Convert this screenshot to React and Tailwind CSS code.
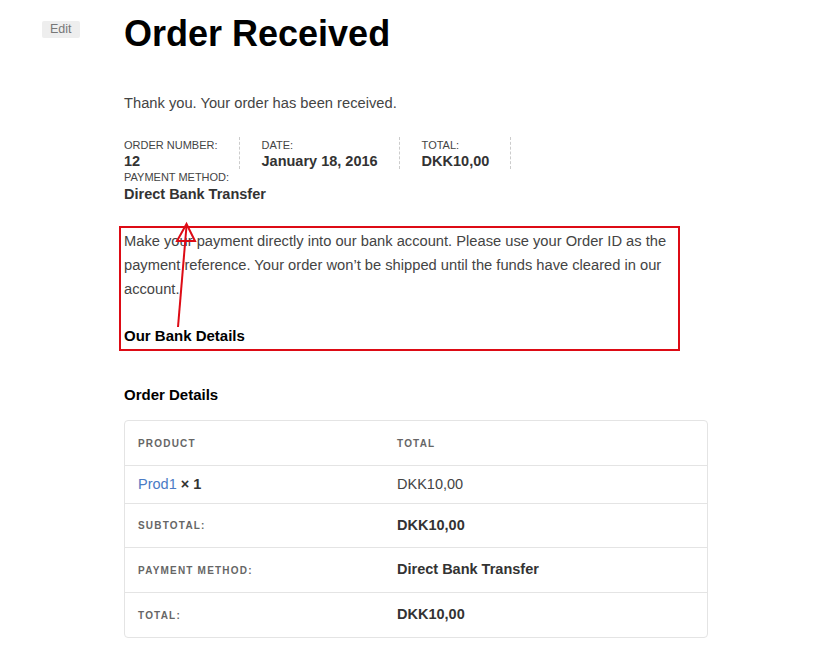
const font = { fontFamily: '"Liberation Sans", Arial, sans-serif' };

const overview = [
    { label: 'Order number:', value: '12' },
    { label: 'Date:', value: 'January 18, 2016' },
    { label: 'Total:', value: 'DKK10,00' },
];

const totals = [
    { label: 'Subtotal:', value: 'DKK10,00', h: 'h-[44px]' },
    { label: 'Payment method:', value: 'Direct Bank Transfer', h: 'h-[45px]' },
    { label: 'Total:', value: 'DKK10,00', h: 'h-[45px]' },
];

const App = () => {
    return (
        <div className="relative w-[832px] h-[668px] bg-white text-[#444] overflow-hidden" style={font}>
            <div className="flex">
                {/* left rail */}
                <div className="w-[124px] shrink-0 pl-[42px] pt-[21px]">
                    <span className="block w-fit bg-[#eee] text-[#777] text-[12.5px] leading-[17px] px-[8px] rounded-[2px]">Edit</span>
                </div>

                <main className="w-[584px] pt-[12px]">
                    <h1 className="text-[36px] leading-[43px] font-bold text-black">Order Received</h1>

                    <p className="mt-[38px] text-[14.7px] leading-[20px] text-[#444]">Thank you. Your order has been received.</p>

                    <ul className="mt-[24px] flex flex-wrap">
                        {overview.map((item) => (
                            <li key={item.label} className="pr-[21px] mr-[22px] border-r border-dashed border-[#ccc] text-[11px] leading-[16px] uppercase text-[#444]">
                                {item.label}
                                <strong className="block text-[14.5px] leading-[16px] normal-case text-[#333]">{item.value}</strong>
                            </li>
                        ))}
                        <li className="w-full text-[11px] leading-[16px] uppercase text-[#444]">
                            Payment method:
                            <strong className="block text-[14.5px] leading-[18px] normal-case text-[#333]">Direct Bank Transfer</strong>
                        </li>
                    </ul>

                    <div className="mt-[23px] -ml-[5px] w-[561px] border-2 border-[#dd0b15] pl-[3px] pt-[1px] pb-[1px]">
                        <p className="text-[14.7px] leading-[24px] text-[#444]">
                            Make your payment directly into our bank account. Please use your Order ID as the payment reference. Your order won’t be shipped until the funds have cleared in our account.
                        </p>
                        <h2 className="mt-[23px] text-[15px] leading-[24px] font-bold text-black">Our Bank Details</h2>
                    </div>

                    <h2 className="mt-[34px] text-[15px] leading-[20px] font-bold text-black">Order Details</h2>

                    <table className="mt-[15px] w-full border-separate border-spacing-0 border border-[#e4e4e4] rounded-[4px] text-[14.5px]">
                        <thead>
                            <tr className="h-[44px]">
                                <th className="w-[259px] pl-[13px] text-left text-[10px] font-bold uppercase tracking-[1.2px] text-[#666]">Product</th>
                                <th className="pl-[13px] text-left text-[10px] font-bold uppercase tracking-[1.2px] text-[#666]">Total</th>
                            </tr>
                        </thead>
                        <tbody>
                            <tr className="h-[38px]">
                                <td className="pl-[13px] border-t border-[#e4e4e4]">
                                    <span className="text-[#4a7bc5]">Prod1</span> <strong className="text-[#333]">× 1</strong>
                                </td>
                                <td className="pl-[13px] border-t border-[#e4e4e4] text-[#444]">DKK10,00</td>
                            </tr>
                            {totals.map((row) => (
                                <tr key={row.label} className={row.h}>
                                    <th className="pl-[13px] border-t border-[#e4e4e4] text-left text-[10px] font-bold uppercase tracking-[1.2px] text-[#666]">{row.label}</th>
                                    <td className="pl-[13px] border-t border-[#e4e4e4] font-bold text-[#333]">{row.value}</td>
                                </tr>
                            ))}
                        </tbody>
                    </table>
                </main>
            </div>

            {/* annotation arrow */}
            <svg className="absolute left-0 top-0 pointer-events-none" width="832" height="668">
                <line x1="178" y1="327" x2="186.5" y2="226" stroke="#dd0b15" strokeWidth="2" />
                <polygon points="186.5,224 177,241 195,241" fill="none" stroke="#dd0b15" strokeWidth="2" strokeLinejoin="miter" />
            </svg>
        </div>
    );
};

export default App;
